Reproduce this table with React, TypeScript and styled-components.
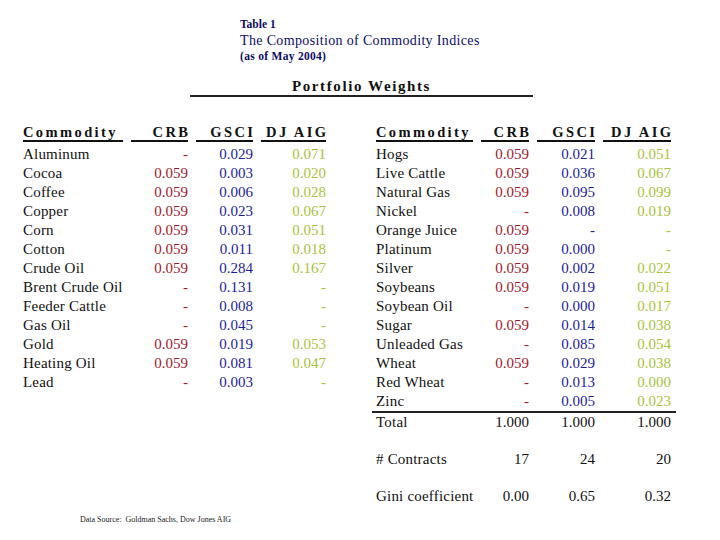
import React from "react";
import styled, { createGlobalStyle } from "styled-components";

type Tone = "crb" | "gsci" | "dj" | "plain";

const tones: Record<Tone, string> = {
  crb: "#a5182c",
  gsci: "#1d1d9c",
  dj: "#a8c43a",
  plain: "#111",
};

type Row = [string, string, string, string];

const leftRows: Row[] = [
  ["Aluminum", "-", "0.029", "0.071"],
  ["Cocoa", "0.059", "0.003", "0.020"],
  ["Coffee", "0.059", "0.006", "0.028"],
  ["Copper", "0.059", "0.023", "0.067"],
  ["Corn", "0.059", "0.031", "0.051"],
  ["Cotton", "0.059", "0.011", "0.018"],
  ["Crude Oil", "0.059", "0.284", "0.167"],
  ["Brent Crude Oil", "-", "0.131", "-"],
  ["Feeder Cattle", "-", "0.008", "-"],
  ["Gas Oil", "-", "0.045", "-"],
  ["Gold", "0.059", "0.019", "0.053"],
  ["Heating Oil", "0.059", "0.081", "0.047"],
  ["Lead", "-", "0.003", "-"],
];

const rightRows: Row[] = [
  ["Hogs", "0.059", "0.021", "0.051"],
  ["Live Cattle", "0.059", "0.036", "0.067"],
  ["Natural Gas", "0.059", "0.095", "0.099"],
  ["Nickel", "-", "0.008", "0.019"],
  ["Orange Juice", "0.059", "-", "-"],
  ["Platinum", "0.059", "0.000", "-"],
  ["Silver", "0.059", "0.002", "0.022"],
  ["Soybeans", "0.059", "0.019", "0.051"],
  ["Soybean Oil", "-", "0.000", "0.017"],
  ["Sugar", "0.059", "0.014", "0.038"],
  ["Unleaded Gas", "-", "0.085", "0.054"],
  ["Wheat", "0.059", "0.029", "0.038"],
  ["Red Wheat", "-", "0.013", "0.000"],
  ["Zinc", "-", "0.005", "0.023"],
];

const GlobalStyle = createGlobalStyle`
  html, body {
    margin: 0;
    padding: 0;
    background: #fff;
  }
  body {
    font-family: "Liberation Serif", "Times New Roman", serif;
    color: #111;
  }
`;

const Page = styled.div`
  width: 720px;
  height: 540px;
  overflow: hidden;
  padding-top: 17px;
  box-sizing: border-box;
`;

const TitleBlock = styled.div`
  padding-left: 240px;
  color: #0c0c66;
`;

const TableNo = styled.div`
  font-size: 11.5px;
  font-weight: bold;
  line-height: 15px;
`;

const Title = styled.div`
  font-size: 14px;
  letter-spacing: 0.35px;
  line-height: 17px;
`;

const AsOf = styled.div`
  font-size: 11.5px;
  font-weight: bold;
  letter-spacing: 0.3px;
  line-height: 14px;
`;

const Weights = styled.div`
  margin: 14px 0 0 190px;
  width: 343px;
  text-align: center;
  font-size: 15px;
  font-weight: bold;
  letter-spacing: 1.6px;
  line-height: 18px;
  border-bottom: 2px solid #222;
`;

const Tables = styled.div`
  display: flex;
  gap: 50px;
  margin-top: 27px;
  padding-left: 23px;
`;

const Grid = styled.div<{ $cols: string }>`
  display: grid;
  grid-template-columns: ${(p) => p.$cols};
  column-gap: 8px;
`;

const Head = styled.div<{ $right?: boolean }>`
  font-size: 14.5px;
  font-weight: bold;
  letter-spacing: 2.4px;
  line-height: 16px;
  border-bottom: 2px solid #111;
  text-align: ${(p) => (p.$right ? "right" : "left")};
  margin-bottom: 3px;
  white-space: nowrap;

  span {
    margin-right: ${(p) => (p.$right ? "-2.4px" : "0")};
  }
`;

const Name = styled.div`
  font-size: 15px;
  letter-spacing: 0.2px;
  line-height: 19px;
  white-space: nowrap;
`;

const Num = styled.div<{ $tone: Tone }>`
  font-size: 15px;
  line-height: 19px;
  text-align: right;
  color: ${(p) => tones[p.$tone]};
`;

const TotalBlock = styled.div`
  margin: 0 -5px 0 -4px;
  padding: 0 5px 0 4px;
  border-top: 2px solid #222;
`;

const Extra = styled.div`
  margin-top: 18px;
`;

const Note = styled.div`
  margin: 9px 0 0 80px;
  font-size: 8px;
  line-height: 10px;
  color: #222;
`;

const LEFT_COLS = "100px 57px 57px 65px";
const RIGHT_COLS = "97px 48px 58px 68px";

const HeaderRow = () => (
  <>
    <Head>Commodity</Head>
    <Head $right><span>CRB</span></Head>
    <Head $right><span>GSCI</span></Head>
    <Head $right><span>DJ AIG</span></Head>
  </>
);

const DataRows = ({ rows }: { rows: Row[] }) => (
  <>
    {rows.map(([name, crb, gsci, dj]) => (
      <React.Fragment key={name}>
        <Name>{name}</Name>
        <Num $tone="crb">{crb}</Num>
        <Num $tone="gsci">{gsci}</Num>
        <Num $tone="dj">{dj}</Num>
      </React.Fragment>
    ))}
  </>
);

const PlainRow = ({ row }: { row: Row }) => (
  <>
    <Name>{row[0]}</Name>
    <Num $tone="plain">{row[1]}</Num>
    <Num $tone="plain">{row[2]}</Num>
    <Num $tone="plain">{row[3]}</Num>
  </>
);

export default function App() {
  return (
    <Page>
      <GlobalStyle />
      <TitleBlock>
        <TableNo>Table 1</TableNo>
        <Title>The Composition of Commodity Indices</Title>
        <AsOf>(as of May 2004)</AsOf>
      </TitleBlock>
      <Weights>Portfolio Weights</Weights>
      <Tables>
        <div>
          <Grid $cols={LEFT_COLS}>
            <HeaderRow />
            <DataRows rows={leftRows} />
          </Grid>
        </div>
        <div>
          <Grid $cols={RIGHT_COLS}>
            <HeaderRow />
            <DataRows rows={rightRows} />
          </Grid>
          <TotalBlock>
            <Grid $cols={RIGHT_COLS}>
              <PlainRow row={["Total", "1.000", "1.000", "1.000"]} />
            </Grid>
          </TotalBlock>
          <Extra>
            <Grid $cols={RIGHT_COLS}>
              <PlainRow row={["# Contracts", "17", "24", "20"]} />
            </Grid>
          </Extra>
          <Extra>
            <Grid $cols={RIGHT_COLS}>
              <PlainRow row={["Gini coefficient", "0.00", "0.65", "0.32"]} />
            </Grid>
          </Extra>
        </div>
      </Tables>
      <Note>Data Source:&nbsp; Goldman Sachs, Dow Jones AIG</Note>
    </Page>
  );
}
